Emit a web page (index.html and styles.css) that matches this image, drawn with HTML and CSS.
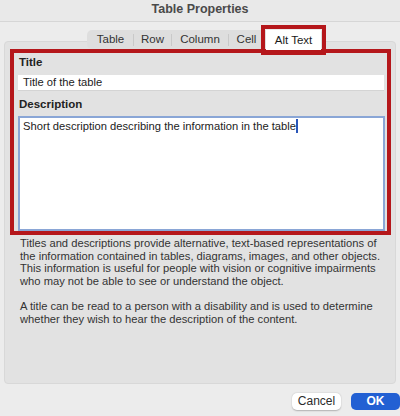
FILE: index.html
```html
<!DOCTYPE html>
<html>
<head>
<meta charset="utf-8">
<link rel="stylesheet" href="styles.css">
</head>
<body>
<div class="window">
  <div class="titlebar">Table Properties</div>
  <div class="tabs">
    <div class="tab t-table">Table</div>
    <div class="sep"></div>
    <div class="tab t-row">Row</div>
    <div class="sep"></div>
    <div class="tab t-col">Column</div>
    <div class="sep"></div>
    <div class="tab t-cell">Cell</div>
    <div class="tab selected">Alt Text</div>
  </div>
  <div class="panel">
    <div class="highlight">
      <div class="label">Title</div>
      <div class="input">Title of the table</div>
      <div class="label desc-label">Description</div>
      <div class="textarea">Short description describing the information in the table<span class="caret"></span></div>
    </div>
    <div class="help">
      <p>Titles and descriptions provide alternative, text-based representations of the information contained in tables, diagrams, images, and other objects. This information is useful for people with vision or cognitive impairments who may not be able to see or understand the object.</p>
      <p>A title can be read to a person with a disability and is used to determine whether they wish to hear the description of the content.</p>
    </div>
  </div>
  <div class="footer">
    <div class="btn cancel">Cancel</div>
    <div class="btn ok">OK</div>
  </div>
</div>
</body>
</html>
```

FILE: styles.css
```css
html, body {
  margin: 0;
  padding: 0;
}
body {
  width: 400px;
  height: 416px;
  overflow: hidden;
  background: #ececec;
  font-family: "Liberation Sans", Arial, sans-serif;
  color: #262626;
}
.window {
  display: flex;
  flex-direction: column;
}
.titlebar {
  height: 21px;
  line-height: 19px;
  border-bottom: 1px solid #d6d6d6;
  background: #e9e9e9;
  text-align: center;
  font-weight: bold;
  font-size: 12.5px;
  color: #4a4a4a;
}
.tabs {
  position: relative;
  z-index: 2;
  display: flex;
  align-items: center;
  align-self: flex-start;
  margin: 8px 0 0 87px;
  padding-right: 2px;
  height: 19px;
  background: #dedede;
  border-radius: 5px;
  font-size: 11.5px;
  color: #333;
}
.tab {
  height: 19px;
  line-height: 19px;
  text-align: center;
}
.t-table { width: 45px; padding-left: 1px; }
.t-row { width: 37px; }
.t-col { width: 56px; }
.t-cell { width: 35px; }
.sep {
  width: 1px;
  height: 12px;
  background: #c9c9c9;
}
.tab.selected {
  background: #fff;
  color: #1a1a1a;
  width: 55px;
  margin-left: 2px;
  height: 20px;
  line-height: 20px;
  outline: 4px solid #b5171b;
  outline-offset: 1px;
}
.panel {
  margin: -8px 4px 0 4px;
  height: 334px;
  background: #e2e2e2;
  border: 1px solid #d8d8d8;
  border-radius: 4px;
  padding: 7px 4px 0 5px;
  box-sizing: content-box;
}
.highlight {
  border: 4px solid #b5171b;
  padding: 2px 2px 0 4px;
  height: 176px;
  display: flex;
  flex-direction: column;
}
.label {
  font-weight: bold;
  font-size: 11.5px;
  line-height: 14px;
  color: #222;
  padding-left: 1px;
}
.input {
  margin-top: 6px;
  height: 15px;
  line-height: 15px;
  background: #fff;
  font-size: 11.2px;
  padding-left: 5px;
  margin-right: 1px;
  color: #222;
  box-shadow: 0 1px 0 #d4d4d4;
}
.desc-label {
  margin-top: 7px;
}
.textarea {
  margin-top: 5px;
  flex: 1;
  background: #fff;
  border: 2px solid #8aa6d6;
  font-size: 11.2px;
  line-height: 14px;
  padding: 1px 3px;
  color: #222;
}
.caret {
  display: inline-block;
  width: 1.5px;
  height: 14px;
  vertical-align: -3px;
  background: #2a56b8;
}
.help {
  padding: 2px 4px 0 10px;
  font-size: 11.2px;
  line-height: 12.6px;
  color: #333;
}
.help p {
  margin: 0 0 12.6px 0;
}
.footer {
  display: flex;
  justify-content: flex-end;
  gap: 10px;
  margin-top: 9px;
}
.btn {
  width: 49px;
  height: 17px;
  line-height: 17px;
  text-align: center;
  font-size: 12px;
  border-radius: 5px;
}
.cancel {
  background: #fff;
  color: #2b2b2b;
  box-shadow: 0 0.5px 1.5px rgba(0,0,0,0.25);
}
.ok {
  background: #2260d3;
  color: #fff;
  font-weight: bold;
}
```
